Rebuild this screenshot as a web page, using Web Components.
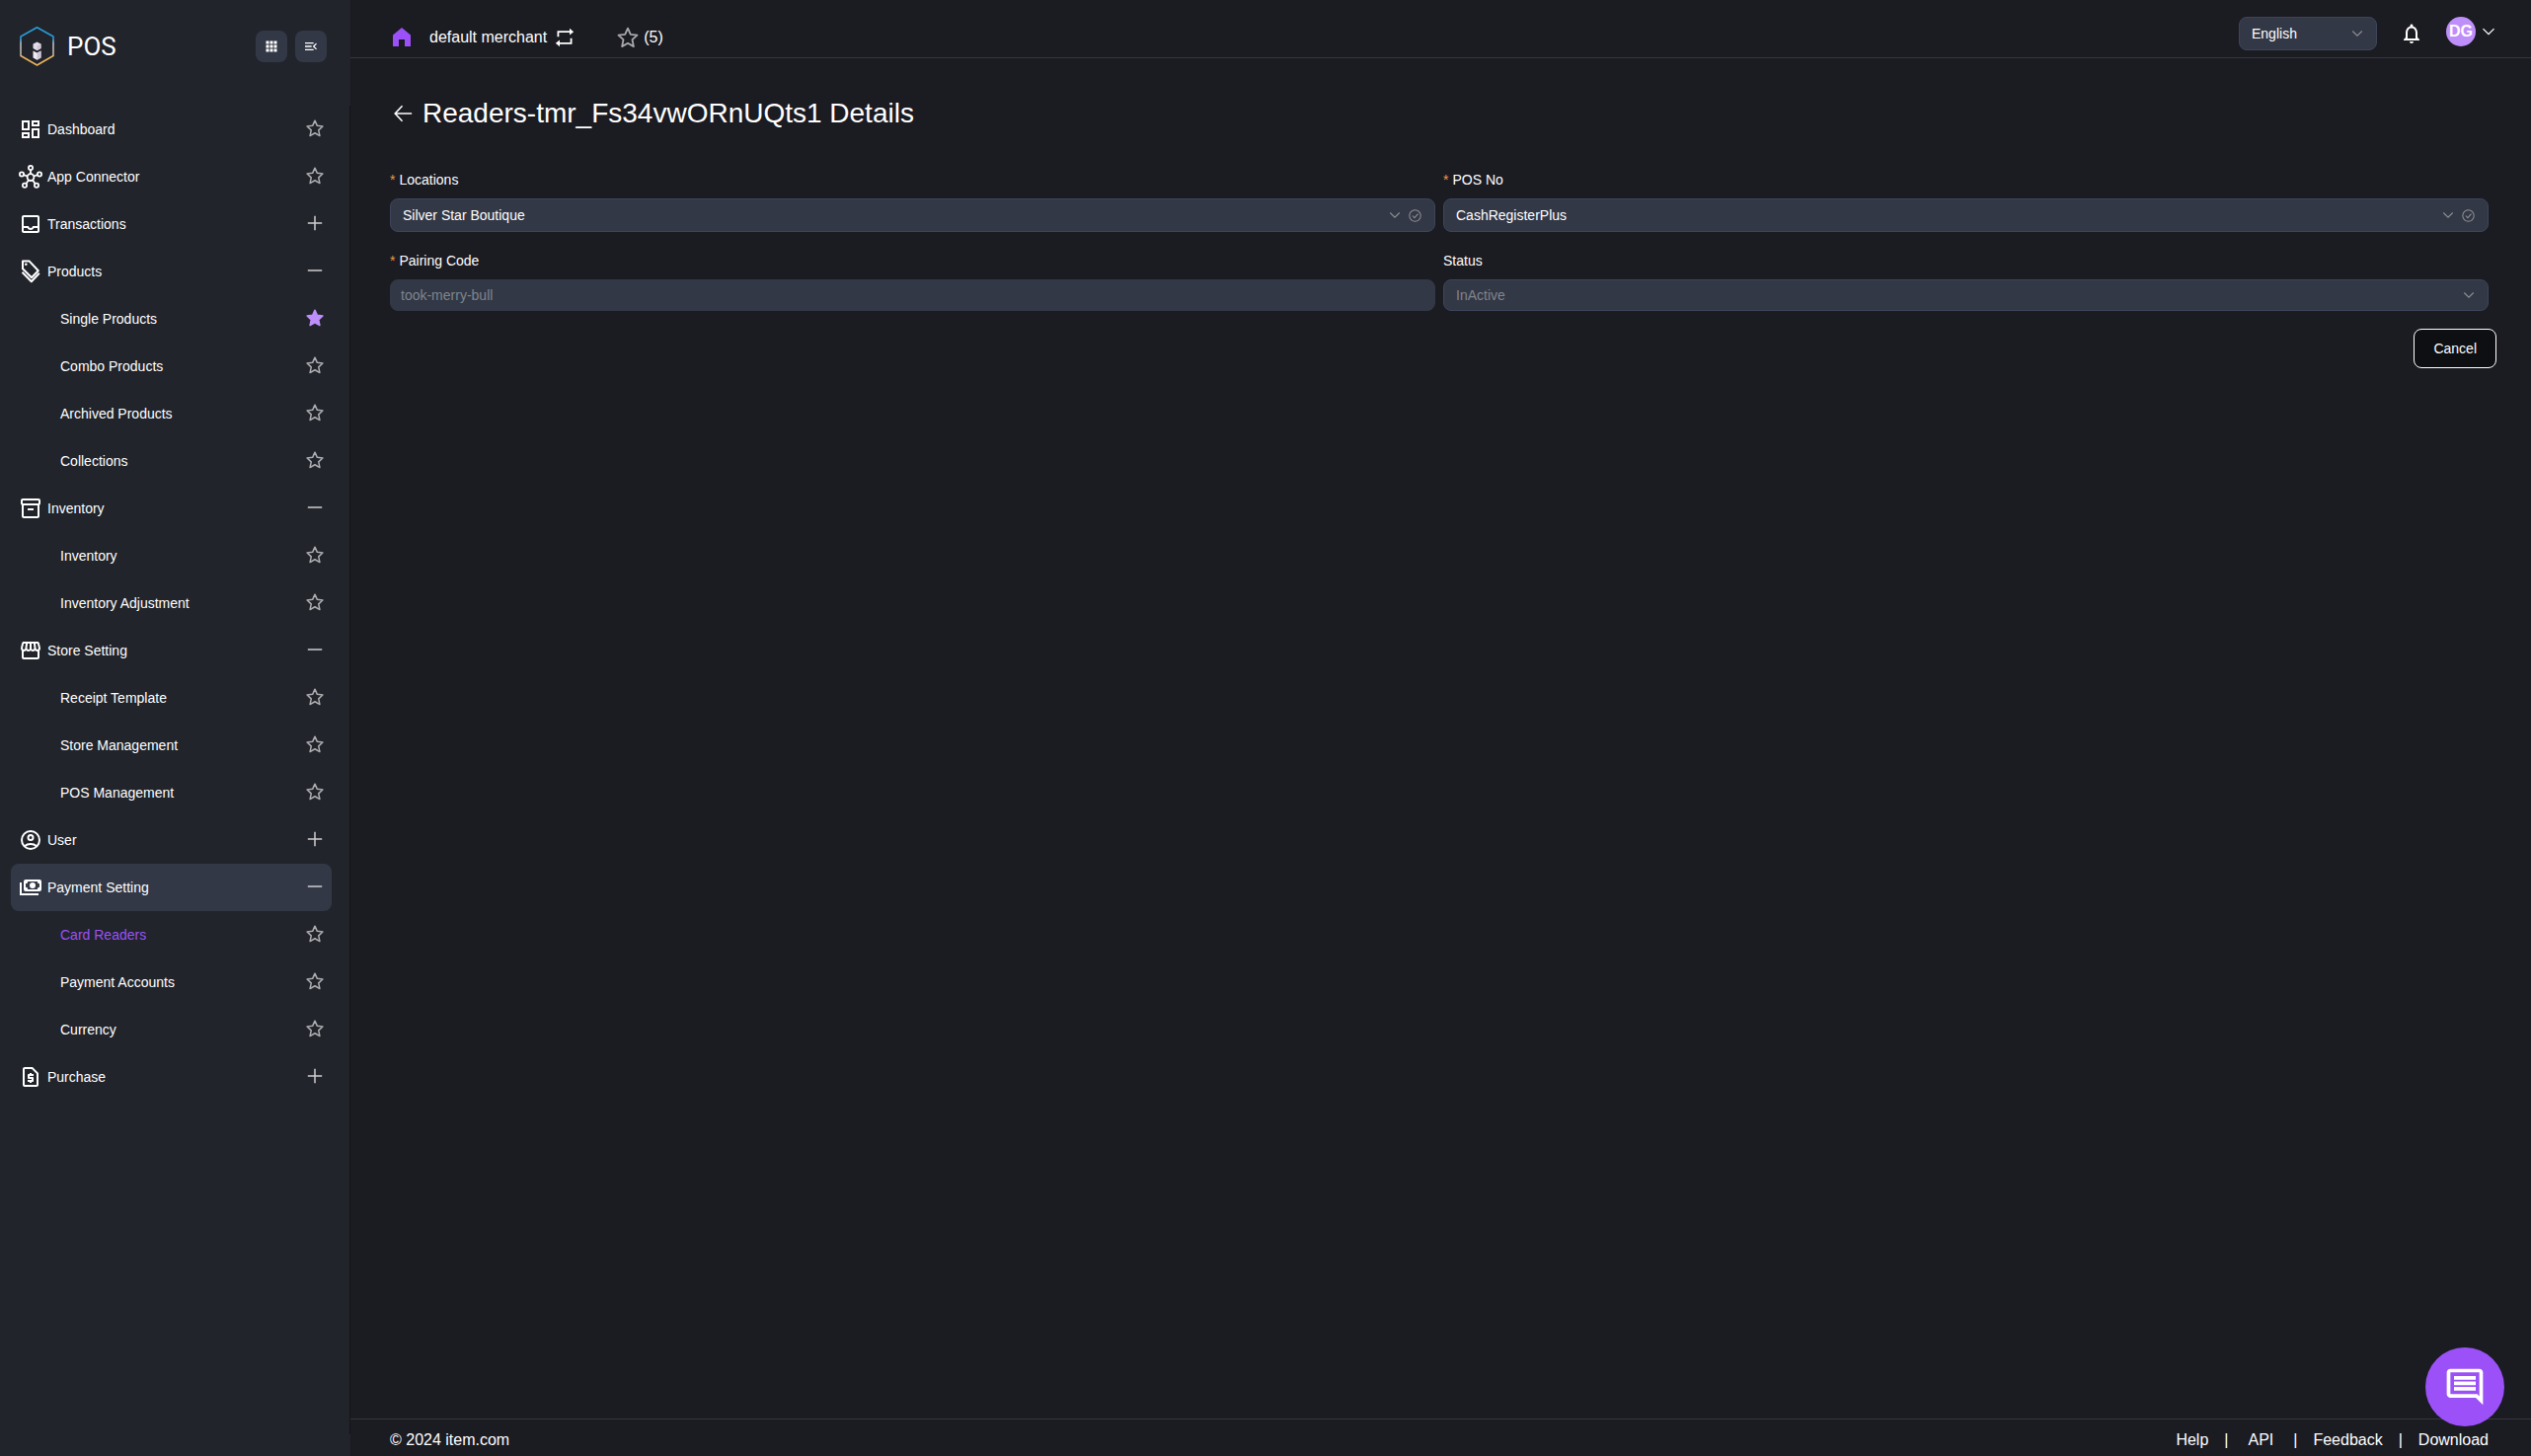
<!DOCTYPE html>
<html lang="en">
<head>
<meta charset="utf-8">
<title>POS</title>
<style>
  html, body {
    margin: 0;
    height: 100%;
  }
  body {
    --side: #21242b;
    --page: #1b1b22;
    --field: #333846;
    --field-border: #3e445a;
    --line: #35363f;
    --purple: #9b51f7;
    --lilac: #be8ffa;
    --muted: #7f858d;
    background: var(--page);
    color: #fff;
    font-family: "Liberation Sans", Arial, sans-serif;
    font-size: 14px;
  }
</style>
</head>
<body>
<pos-app>
  <side-bar slot="side">
    <nav-item icon="dashboard" action="star">Dashboard</nav-item>
    <nav-item icon="hub" action="star">App Connector</nav-item>
    <nav-item icon="inbox" action="plus">Transactions</nav-item>
    <nav-item icon="tags" action="minus">Products</nav-item>
    <nav-item action="starred">Single Products</nav-item>
    <nav-item action="star">Combo Products</nav-item>
    <nav-item action="star">Archived Products</nav-item>
    <nav-item action="star">Collections</nav-item>
    <nav-item icon="archive" action="minus">Inventory</nav-item>
    <nav-item action="star">Inventory</nav-item>
    <nav-item action="star">Inventory Adjustment</nav-item>
    <nav-item icon="store" action="minus">Store Setting</nav-item>
    <nav-item action="star">Receipt Template</nav-item>
    <nav-item action="star">Store Management</nav-item>
    <nav-item action="star">POS Management</nav-item>
    <nav-item icon="user" action="plus">User</nav-item>
    <nav-item icon="payments" action="minus" active>Payment Setting</nav-item>
    <nav-item action="star" current>Card Readers</nav-item>
    <nav-item action="star">Payment Accounts</nav-item>
    <nav-item action="star">Currency</nav-item>
    <nav-item icon="quote" action="plus">Purchase</nav-item>
  </side-bar>
  <top-bar slot="top" initials="DG">default merchant</top-bar>
  <detail-page heading="Readers-tmr_Fs34vwORnUQts1 Details">
    <form-field label="Locations" kind="select" value="Silver Star Boutique" required checked></form-field>
    <form-field label="POS No" kind="select" value="CashRegisterPlus" required checked></form-field>
    <form-field label="Pairing Code" kind="text" value="took-merry-bull" required disabled></form-field>
    <form-field label="Status" kind="select" value="InActive" disabled></form-field>
  </detail-page>
  <page-footer slot="bottom">© 2024 item.com</page-footer>
</pos-app>
<chat-button></chat-button>

<script>
// every icon is drawn in a 24 unit box
const STAR = 'M12 2.6l2.8 6.2 6.7.8-5 4.6 1.4 6.9-5.9-3.4-5.9 3.4 1.4-6.9-5-4.6 6.7-.8z';
const icons = {
  dashboard: '<path d="M19 5v2h-4V5h4M9 5v6H5V5h4m10 8v6h-4v-6h4M9 17v2H5v-2h4M21 3h-8v6h8V3zM11 3H3v10h8V3zm10 8h-8v10h8V11zm-10 4H3v6h8v-6z"/>',
  hub: '<g fill="none" stroke="currentColor" stroke-width="1.8"><circle cx="12" cy="12.6" r="3.4"/><circle cx="12" cy="3" r="2.1"/><circle cx="3" cy="9.5" r="2.1"/><circle cx="21" cy="9.5" r="2.1"/><circle cx="6" cy="20.8" r="2.1"/><circle cx="18" cy="20.8" r="2.1"/><path d="M12 5v4.200M5 10.200l3.800 1.300M19 10.200l-3.800 1.300M7.300 19.200l2.600-3.800M16.700 19.200l-2.600-3.800"/></g>',
  inbox: '<path d="M19 3H5c-1.100 0-2 .9-2 2v14c0 1.100.9 2 2 2h14c1.100 0 2-.9 2-2V5c0-1.100-.9-2-2-2zm0 16H5v-3h3.560c.69 1.190 1.970 2 3.450 2s2.750-.81 3.450-2H19v3zm0-5h-4.990c0 1.100-.9 2-2 2s-2-.9-2-2H5V5h14v9z"/>',
  tags: '<g fill="none" stroke="currentColor" stroke-width="2" stroke-linejoin="round"><path d="M4 1.400h6.500l9.300 9.800-6.800 7L4 9.200z"/><path d="M3.500 12.800l9.300 9.500 8-8.500"/></g><circle cx="7.300" cy="4.800" r="1.300"/>',
  archive: '<path d="M20 2H4c-1 0-2 .9-2 2v3.010c0 .72.43 1.340 1 1.690V20c0 1.100 1.100 2 2 2h14c.9 0 2-.9 2-2V8.700c.57-.35 1-.97 1-1.690V4c0-1.100-1-2-2-2zm-1 18H5V9h14v11zm1-13H4V4h16v3z"/><path d="M9 12h6v2H9z"/>',
  store: '<path d="M21.900 8.890l-1.050-4.370c-.22-.9-1-1.520-1.910-1.520H5.050c-.9 0-1.690.63-1.900 1.520L2.100 8.890c-.24 1.020-.02 2.060.62 2.880.08.11.19.19.28.29V19c0 1.100.9 2 2 2h14c1.100 0 2-.9 2-2v-6.940c.09-.09.2-.18.28-.28.64-.82.87-1.870.62-2.890zm-2.990-3.900l1.050 4.370c.1.42.01.84-.25 1.170-.14.18-.44.47-.94.47-.61 0-1.140-.49-1.210-1.140L16.980 5l1.930-.01zM13 5h1.960l.54 4.520c.05.39-.07.78-.33 1.070-.22.26-.54.41-.95.41-.67 0-1.220-.59-1.220-1.310V5zM8.490 9.520L9.040 5H11v4.690c0 .72-.55 1.310-1.290 1.310-.34 0-.65-.15-.89-.41-.25-.29-.37-.68-.33-1.070zm-4.450-.16L5.050 5h1.970l-.58 4.860c-.08.65-.6 1.140-1.210 1.140-.49 0-.8-.29-.93-.47-.27-.32-.36-.75-.26-1.170zM5 19v-6.030c.08.01.15.03.23.03.87 0 1.660-.36 2.240-.95.6.6 1.400.95 2.310.95.87 0 1.650-.36 2.230-.93.59.57 1.390.93 2.290.93.84 0 1.640-.35 2.240-.95.58.59 1.370.95 2.240.95.08 0 .15-.02.23-.03V19H5z"/>',
  user: '<g fill="none" stroke="currentColor" stroke-width="2"><circle cx="12" cy="12" r="9"/><circle cx="12" cy="9.500" r="2.500"/><path d="M5.800 18.300c3.600-3 8.800-3 12.400 0"/></g>',
  payments: '<path fill-rule="evenodd" d="M7 4h14a2 2 0 0 1 2 2v8a2 2 0 0 1-2 2H7a2 2 0 0 1-2-2V6a2 2 0 0 1 2-2zm2.200 2A2.200 2.200 0 0 1 7 8.200v3.600A2.200 2.200 0 0 1 9.200 14h9.600a2.200 2.200 0 0 1 2.200-2.200V8.200A2.200 2.200 0 0 1 18.800 6z"/><circle cx="14" cy="10" r="3"/><path d="M1 7h2v11h17v2H1z"/>',
  quote: '<path d="M14 2H6c-1.100 0-2 .9-2 2v16c0 1.100.9 2 2 2h12c1.100 0 2-.9 2-2V8l-6-6zM6 20V4h7.170L18 8.830V20H6z"/><path d="M11 18h2v-1h1c.55 0 1-.45 1-1v-3c0-.55-.45-1-1-1h-3v-1h4V9h-2V8h-2v1h-1c-.55 0-1 .45-1 1v3c0 .55.45 1 1 1h3v1H9v2h2z"/>',
  star: `<path fill="none" stroke="currentColor" stroke-width="1.800" stroke-linejoin="round" d="${STAR}"/>`,
  starred: `<path stroke="currentColor" stroke-width="1.800" stroke-linejoin="round" d="${STAR}"/>`,
  plus: '<path d="M11 2.400h2V11h8.600v2H13v8.600h-2V13H2.400v-2H11z"/>',
  minus: '<path d="M2.400 11h19.200v2H2.400z"/>',
  grid: '<path d="M1 1h6v6H1zM9 1h6v6H9zM17 1h6v6h-6zM1 9h6v6H1zM9 9h6v6H9zM17 9h6v6h-6zM1 17h6v6H1zM9 17h6v6H9zM17 17h6v6h-6z"/>',
  fold: '<path d="M3 6h13v2H3zM3 11h10v2H3zM3 16h13v2H3zM21 15.600L17.400 12 21 8.400 19.600 7l-5 5 5 5z"/>',
  home: '<path d="M12 2l9 7.500V21h-6v-7H9v7H3V9.500z"/>',
  swap: '<path d="M3 11V3.800h15V1l5 4-5 4V6H5.200v5zM21 13v7.200H6V23l-5-4 5-4v3h12.800v-5z"/>',
  bell: '<path d="M12 22c1.100 0 2-.9 2-2h-4c0 1.100.9 2 2 2zm6-6v-5c0-3.070-1.630-5.640-4.500-6.320V4c0-.83-.67-1.500-1.500-1.500s-1.500.67-1.500 1.500v.68C7.640 5.360 6 7.920 6 11v5l-2 2v1h16v-1l-2-2zm-2 1H8v-6c0-2.480 1.510-4.500 4-4.500s4 2.020 4 4.500v6z"/>',
  down: '<path fill="none" stroke="currentColor" stroke-width="2.200" d="M2.500 7l9.500 9.500L21.500 7"/>',
  check: '<g fill="none" stroke="currentColor" stroke-width="1.900"><circle cx="12" cy="12" r="10.500"/><path d="M7 12l4 4 6.500-7.500"/></g>',
  back: '<path fill="none" stroke="currentColor" stroke-width="1.700" d="M22 12H4M11.500 3.500L3.500 12l8 8.500"/>',
  chat: '<path d="M22 4c0-1.100-.9-2-2-2H4c-1.100 0-2 .9-2 2v12c0 1.100.9 2 2 2h14l4 4V4zM20 4v13.170L18.830 16H4V4h16zM6 12h12v2H6zm0-3h12v2H6zm0-3h12v2H6z"/>',
};

class AppIcon extends HTMLElement {
  constructor() {
    super();
    this.attachShadow({ mode: 'open' });
  }

  connectedCallback() {
    const size = this.getAttribute('size') || 24;
    this.shadowRoot.innerHTML = `
      <style>
        :host { display: inline-flex; flex: none; }
        svg { display: block; overflow: visible; }
      </style>
      <svg viewBox="0 0 24 24" width="${size}" height="${size}" fill="currentColor" aria-hidden="true">${icons[this.getAttribute('name')]}</svg>
    `;
  }
}
customElements.define('app-icon', AppIcon);

// one row of the side menu, a row without an icon is a child entry
class NavItem extends HTMLElement {
  constructor() {
    super();
    this.attachShadow({ mode: 'open' });
  }

  connectedCallback() {
    const icon = this.getAttribute('icon');
    const action = this.getAttribute('action');
    const isStar = action.startsWith('star');
    this.shadowRoot.innerHTML = `
      <style>
        :host {
          display: flex;
          align-items: center;
          height: 48px;
          padding: 0 7px 0 8px;
          border-radius: 8px;
        }
        :host([active]) { background: var(--field); }
        :host([current]) a { color: var(--purple); }
        a {
          flex: 1;
          display: flex;
          align-items: center;
          gap: 5px;
          color: inherit;
          text-decoration: none;
        }
        .child { padding-left: 42px; }
        button {
          display: flex;
          justify-content: center;
          width: 20px;
          padding: 0 0 2px;
          border: 0;
          background: none;
          color: #aeaeb1;
        }
        .plus, .minus { color: #cfcdd2; }
        .starred { color: var(--lilac); }
      </style>
      <a href="#" class="${icon ? 'group' : 'child'}">
        ${icon ? `<app-icon name="${icon}"></app-icon>` : ''}
        <span><slot></slot></span>
      </a>
      <button type="button" class="${action}" aria-label="${isStar ? 'Favorite' : 'Toggle'}">
        <app-icon name="${action}" size="${isStar ? 20 : 18}"></app-icon>
      </button>
    `;
  }
}
customElements.define('nav-item', NavItem);

const sideTemplate = document.createElement('template');
sideTemplate.innerHTML = `
  <style>
  :host {
    display: flex;
    flex-direction: column;
    width: 355px;
    background: var(--side);
  }
  header {
    display: flex;
    align-items: center;
    gap: 8px;
    padding: 26px 24px 40px 19px;
  }
  .name {
    flex: 1;
    margin-left: 5px;
    font-family: Roboto, sans-serif;
    font-size: 26px;
    line-height: 32px;
    font-weight: 400;
  }
  header button {
    display: flex;
    align-items: center;
    justify-content: center;
    width: 32px;
    height: 32px;
    padding: 0;
    border: 0;
    border-radius: 8px;
    background: var(--field);
    color: #fff;
  }
  nav {
    flex: 1;
    margin-bottom: 22px;
    padding: 0 18px 0 11px;
    border-right: 1px solid #131418;
  }
  </style>
  <header>
    <svg viewBox="0 0 36 41" width="36" height="41" aria-hidden="true">
      <defs>
        <linearGradient id="edge" x1="0" y1="0" x2="0" y2="1">
          <stop offset=".3" stop-color="#2a9ad6" />
          <stop offset=".42" stop-color="#b9bcc4" />
          <stop offset=".7" stop-color="#c2b6a6" />
          <stop offset=".8" stop-color="#e8b25c" />
        </linearGradient>
      </defs>
      <path d="M18.500 1.800 L35 11 V30.500 L18.500 40 L2 30.500 V11 Z" fill="none" stroke="url(#edge)" stroke-width="1.600" stroke-linejoin="round" />
      <path d="M18.500 16.500 l4 2 v4.500 l-4 2.200 l-4 -2.200 v-4.500 z" fill="#e3dcea" />
      <path d="M14.500 25.500 l4 2 l4 -2 v7 l-4 2.200 l-4 -2.200 z" fill="#f1ebf6" />
      <path d="M18.500 20.500 l4 -2 v4.500 l-4 2.200 z M18.500 27.500 l4 -2 v7 l-4 2.200 z" fill="#cfc6d8" />
    </svg>
    <span class="name">POS</span>
    <button type="button" aria-label="Apps"><app-icon name="grid" size="12"></app-icon></button>
    <button type="button" aria-label="Fold menu"><app-icon name="fold" size="16"></app-icon></button>
  </header>
  <nav><slot></slot></nav>
`;

class SideBar extends HTMLElement {
  constructor() {
    super();
    this.attachShadow({ mode: 'open' });
    this.shadowRoot.appendChild(sideTemplate.content.cloneNode(true));
  }
}
customElements.define('side-bar', SideBar);

// a select with its icons laid over the right end
const selectStyles = `
  .box { display: grid; align-items: center; }
  .box > * { grid-area: 1 / 1; }
  .box .marks {
    justify-self: end;
    display: flex;
    align-items: center;
    gap: 8px;
    margin-right: 14px;
    color: #8d8f94;
    pointer-events: none;
  }
  select, input {
    box-sizing: border-box;
    width: 100%;
    height: 34px;
    margin: 0;
    border: 1px solid var(--field-border);
    border-radius: 8px;
    background: var(--field);
    color: #fff;
    font: inherit;
    appearance: none;
    outline: 0;
  }
  select { padding: 0 12px; }
  input { padding: 0 10px; border-color: var(--field); }
  select:disabled, input:disabled {
    height: 32px;
    color: var(--muted);
    opacity: 1;
  }
`;

class FormField extends HTMLElement {
  constructor() {
    super();
    this.attachShadow({ mode: 'open' });
  }

  connectedCallback() {
    const value = this.getAttribute('value');
    const disabled = this.hasAttribute('disabled') ? 'disabled' : '';
    const isSelect = this.getAttribute('kind') === 'select';
    this.shadowRoot.innerHTML = `
      <style>
        ${selectStyles}
        :host { display: block; }
        label {
          display: flex;
          gap: 4px;
          margin-bottom: 8px;
          line-height: 22px;
        }
        .required { color: #f09a3e; }
      </style>
      <label for="control">
        ${this.hasAttribute('required') ? '<span class="required">*</span>' : ''}
        <span>${this.getAttribute('label')}</span>
      </label>
      <div class="box">
        ${isSelect
          ? `<select id="control" ${disabled}><option>${value}</option></select>
             <span class="marks">
               <app-icon name="down" size="12"></app-icon>
               ${this.hasAttribute('checked') ? '<app-icon name="check" size="13"></app-icon>' : ''}
             </span>`
          : `<input id="control" type="text" value="${value}" ${disabled}>`}
      </div>
    `;
  }
}
customElements.define('form-field', FormField);

class TopBar extends HTMLElement {
  constructor() {
    super();
    this.attachShadow({ mode: 'open' });
  }

  connectedCallback() {
    this.shadowRoot.innerHTML = `
      <style>
        ${selectStyles}
        :host {
          display: flex;
          align-items: center;
          justify-content: space-between;
          padding: 17px 36px 7px 40px;
          border-bottom: 1px solid var(--line);
        }
        .left, .right, .merchant, .saved, .account {
          display: flex;
          align-items: center;
        }
        .left { gap: 16px; padding-top: 8px; font-size: 16px; }
        .left a { display: flex; color: var(--purple); }
        .merchant { gap: 8px; }
        .saved { gap: 4px; margin-left: 26px; }
        .saved app-icon { color: #a9a9ad; }
        button {
          padding: 0;
          border: 0;
          background: none;
          color: inherit;
          font: inherit;
        }
        .right { gap: 23px; }
        .box { width: 140px; }
        .bell { display: flex; }
        .account { gap: 6px; align-self: flex-start; }
        .avatar {
          width: 30px;
          border-radius: 50%;
          background: var(--lilac);
          font-size: 16px;
          line-height: 30px;
          font-weight: 700;
          text-align: center;
        }
      </style>
      <div class="left">
        <a href="#" aria-label="Home"><app-icon name="home"></app-icon></a>
        <button type="button" class="merchant"><slot></slot><app-icon name="swap" size="20"></app-icon></button>
        <button type="button" class="saved"><app-icon name="star"></app-icon>(5)</button>
      </div>
      <div class="right">
        <div class="box">
          <select aria-label="Language"><option>English</option></select>
          <span class="marks"><app-icon name="down" size="12"></app-icon></span>
        </div>
        <button type="button" class="bell" aria-label="Notifications"><app-icon name="bell"></app-icon></button>
        <button type="button" class="account">
          <span class="avatar">${this.getAttribute('initials')}</span>
          <app-icon name="down" size="14"></app-icon>
        </button>
      </div>
    `;
  }
}
customElements.define('top-bar', TopBar);

class DetailPage extends HTMLElement {
  constructor() {
    super();
    this.attachShadow({ mode: 'open' });
  }

  connectedCallback() {
    this.shadowRoot.innerHTML = `
      <style>
        :host { display: block; padding: 40px 35px 40px 40px; }
        .title {
          display: flex;
          align-items: center;
          gap: 9px;
          margin-bottom: 40px;
        }
        .title button {
          display: flex;
          padding: 0 0 0 2px;
          border: 0;
          background: none;
          color: #fff;
        }
        h1 {
          margin: 0;
          font-size: 28px;
          line-height: 32px;
          font-weight: 400;
        }
        .fields {
          display: grid;
          grid-template-columns: 1fr 1fr;
          gap: 18px 8px;
          margin-right: 8px;
        }
        .actions {
          display: flex;
          justify-content: flex-end;
          margin-top: 18px;
        }
        .cancel {
          height: 40px;
          padding: 0 19px;
          border: 1px solid #fff;
          border-radius: 8px;
          background: #0e0f13;
          color: #fff;
          font: inherit;
        }
      </style>
      <div class="title">
        <button type="button" aria-label="Back"><app-icon name="back" size="22"></app-icon></button>
        <h1>${this.getAttribute('heading')}</h1>
      </div>
      <form>
        <div class="fields"><slot></slot></div>
        <div class="actions"><button type="button" class="cancel">Cancel</button></div>
      </form>
    `;
  }
}
customElements.define('detail-page', DetailPage);

const footerTemplate = document.createElement('template');
footerTemplate.innerHTML = `
  <style>
  :host {
    display: flex;
    justify-content: space-between;
    padding: 11px 43px 6px 40px;
    border-top: 1px solid var(--line);
    font-size: 16px;
    line-height: 20px;
  }
  nav { display: flex; gap: 16px; }
  a { color: inherit; text-decoration: none; }
  .api { padding: 0 4px; }
  </style>
  <span><slot></slot></span>
  <nav>
    <a href="#">Help</a><span>|</span>
    <a href="#" class="api">API</a><span>|</span>
    <a href="#">Feedback</a><span>|</span>
    <a href="#">Download</a>
  </nav>
`;

class PageFooter extends HTMLElement {
  constructor() {
    super();
    this.attachShadow({ mode: 'open' });
    this.shadowRoot.appendChild(footerTemplate.content.cloneNode(true));
  }
}
customElements.define('page-footer', PageFooter);

// floating button, stays over the bottom right corner
class ChatButton extends HTMLElement {
  constructor() {
    super();
    this.attachShadow({ mode: 'open' });
  }

  connectedCallback() {
    this.shadowRoot.innerHTML = `
      <style>
        :host { position: fixed; right: 27px; bottom: 30px; }
        button {
          display: flex;
          align-items: center;
          justify-content: center;
          width: 80px;
          height: 80px;
          padding: 0;
          border: 0;
          border-radius: 50%;
          background: var(--purple);
          color: #fff;
        }
      </style>
      <button type="button" aria-label="Chat"><app-icon name="chat" size="44"></app-icon></button>
    `;
  }
}
customElements.define('chat-button', ChatButton);

const appTemplate = document.createElement('template');
appTemplate.innerHTML = `
  <style>
  :host { display: flex; min-height: 100vh; }
  .content {
    flex: 1;
    min-width: 0;
    display: flex;
    flex-direction: column;
  }
  main { flex: 1; }
  </style>
  <slot name="side"></slot>
  <div class="content">
    <slot name="top"></slot>
    <main><slot></slot></main>
    <slot name="bottom"></slot>
  </div>
`;

class PosApp extends HTMLElement {
  constructor() {
    super();
    this.attachShadow({ mode: 'open' });
    this.shadowRoot.appendChild(appTemplate.content.cloneNode(true));
  }
}
customElements.define('pos-app', PosApp);
</script>
</body>
</html>
